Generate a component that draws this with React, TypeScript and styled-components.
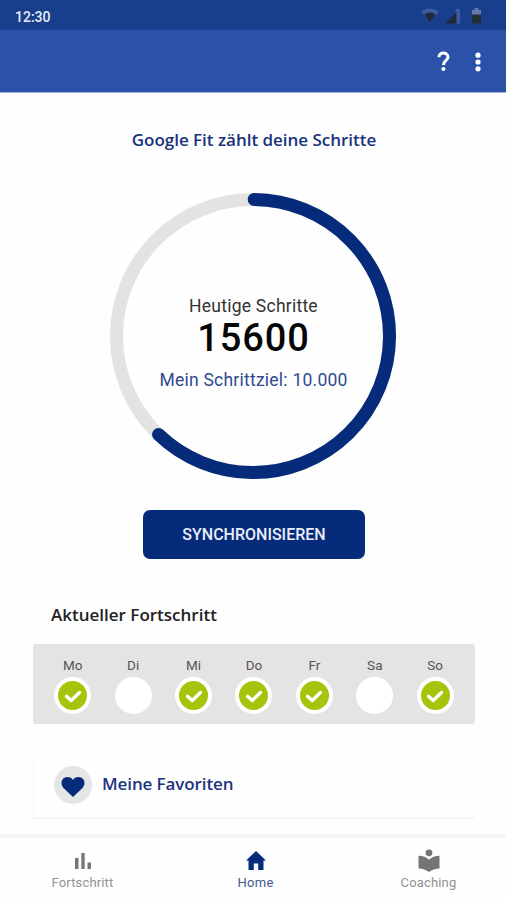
import React from 'react';
import styled, { createGlobalStyle } from 'styled-components';

const navy = '#062b7a';

const GlobalStyle = createGlobalStyle`
  * { box-sizing: border-box; }
  body { margin: 0; background: #fefefe; font-family: Roboto, sans-serif; }
`;

const Screen = styled.div`
  width: 506px;
  height: 900px;
  display: flex;
  flex-direction: column;
  overflow: hidden;
  background: #fefefe;
`;

const StatusBar = styled.div`
  height: 30px;
  flex: none;
  display: flex;
  align-items: center;
  justify-content: space-between;
  padding: 3px 23px 0 15px;
  background: #193f8c;
`;

const Clock = styled.span`
  color: #e6ecfa;
  font-size: 14px;
  font-weight: 500;
  line-height: 16px;
`;

const StatusIcons = styled.div`
  display: flex;
  align-items: center;
  gap: 6px;
`;

const AppBar = styled.header`
  height: 63px;
  flex: none;
  display: flex;
  align-items: center;
  justify-content: flex-end;
  gap: 24px;
  padding: 1px 24px 0 0;
  background: #2b52a8;
  border-bottom: 1px solid #9db4dc;
`;

const BarButton = styled.button`
  display: flex;
  padding: 0;
  border: 0;
  background: none;
`;

const Content = styled.main`
  flex: 1;
  min-height: 0;
  display: flex;
  flex-direction: column;
  align-items: center;
`;

const Title = styled.h1`
  margin: 35px 0 0;
  padding-left: 2px;
  height: 24px;
  font: 600 17px/24px 'Open Sans', sans-serif;
  letter-spacing: -0.02px;
  white-space: nowrap;
  color: #18327d;
`;

const Ring = styled.div`
  display: grid;
  width: 286px;
  height: 286px;
  margin-top: 41px;
  & > * { grid-area: 1 / 1; }
`;

const RingLabels = styled.div`
  display: flex;
  flex-direction: column;
  align-items: center;
  padding-top: 102px;
  padding-left: 1px;
  white-space: nowrap;
`;

const TodayLabel = styled.span`
  font-size: 17.5px;
  line-height: 22px;
  letter-spacing: 0.24px;
  color: #333;
`;

const StepCount = styled.strong`
  font: 500 38px/42px Roboto, sans-serif;
  letter-spacing: 0.9px;
  color: #050505;
`;

const GoalLabel = styled.span`
  margin-top: 10px;
  font-size: 17.5px;
  line-height: 22px;
  letter-spacing: 0.24px;
  color: #304a8f;
`;

const SyncButton = styled.button`
  width: 222px;
  height: 49px;
  margin-top: 31px;
  margin-left: 2px;
  padding: 0;
  border: 0;
  border-radius: 7px;
  background: ${navy};
  color: #e9edf8;
  font: 500 16px/20px Roboto, sans-serif;
`;

const SectionTitle = styled.h2`
  align-self: flex-start;
  margin: 44px 0 0 51px;
  font: 600 17px/24px 'Open Sans', sans-serif;
  white-space: nowrap;
  color: #222;
`;

const Week = styled.div`
  width: 442px;
  height: 80px;
  margin-top: 17px;
  margin-left: 2px;
  padding: 13px 9.6px 0;
  display: grid;
  grid-template-columns: repeat(7, 1fr);
  border-radius: 3px;
  background: #e4e4e4;
`;

const Day = styled.div`
  display: flex;
  flex-direction: column;
  align-items: center;
  gap: 3px;
`;

const DayName = styled.span`
  font-size: 13.5px;
  line-height: 17px;
  color: #555;
`;

const DayMark = styled.div<{ $done: boolean }>`
  width: 37px;
  height: 37px;
  border: 4.5px solid #fff;
  border-radius: 50%;
  background: ${(p) => (p.$done ? '#a5c50c' : '#fff')};
  display: flex;
  align-items: center;
  justify-content: center;
`;

const Favorites = styled.div`
  width: 442px;
  height: 67px;
  margin-top: 28px;
  margin-left: 2px;
  padding: 0 0 0 20px;
  display: flex;
  align-items: center;
  gap: 10px;
  border: 1px solid #f9f9f9;
  border-top-color: transparent;
  border-bottom: 2px solid #f5f5f5;
  border-radius: 3px;
`;

const HeartBadge = styled.div`
  width: 38px;
  height: 38px;
  border-radius: 50%;
  background: #e4e5e7;
  display: flex;
  align-items: center;
  justify-content: center;
  padding-top: 3px;
`;

const FavoritesLabel = styled.span`
  font: 600 17px/24px 'Open Sans', sans-serif;
  letter-spacing: -0.1px;
  white-space: nowrap;
  margin-top: -3px;
  color: #1c347f;
`;

const BottomNav = styled.nav`
  height: 66px;
  flex: none;
  margin: 0 -9px 0 -4px;
  display: grid;
  grid-template-columns: repeat(3, 1fr);
  border-top: 4px solid #f6f6f6;
`;

const Tab = styled.a<{ $active?: boolean }>`
  display: flex;
  flex-direction: column;
  align-items: center;
  padding-top: 11px;
  gap: 2px;
  font-size: 13px;
  line-height: 17px;
  letter-spacing: ${(p) => (p.$active ? '0.3px' : '0.15px')};
  color: ${(p) => (p.$active ? '#44588f' : '#929292')};
`;

const days: [string, boolean][] = [
  ['Mo', true], ['Di', false], ['Mi', true], ['Do', true], ['Fr', true], ['Sa', false], ['So', true],
];

const radius = 136.5;
const circumference = 2 * Math.PI * radius;
const progress = 0.62;

const Check = () => (
  <svg width="18" height="14" viewBox="0 0 18 14" fill="none">
    <path d="M2.500 7.200 7.200 11.500 15.500 3.500" stroke="#fff" strokeWidth="3.300" strokeLinecap="round" strokeLinejoin="round" />
  </svg>
);

export default function App() {
  return (
    <>
      <GlobalStyle />
      <Screen>
        <StatusBar>
          <Clock>12:30</Clock>
          <StatusIcons>
            <svg width="62" height="18" viewBox="0 0 62 18">
              <path d="M0 3.500Q9-2.500 18 3.500L9 14.500Z" fill="#3d5c9f" />
              <path d="M3.200 6.700Q9 2.500 14.800 6.700L9 14.500Z" fill="#202a3c" />
              <path d="M34.500 1H39V15.500H34.500Z" fill="#3d5c9f" />
              <path d="M24.500 15.500 35.500 4V15.500Z" fill="#202a3c" />
              <path d="M51 2H53.500V0H57.500V2H60V7.500H51Z" fill="#6179ad" />
              <path d="M51 6.500H60V15.500H51Z" fill="#252e36" />
            </svg>
          </StatusIcons>
        </StatusBar>
        <AppBar>
          <BarButton aria-label="Hilfe">
            <svg width="13" height="21" viewBox="0 0 13 21" fill="none">
              <path d="M2 6.200C2 3.500 4 2 6.400 2S11 3.500 11 6C11 9.300 6.500 9.600 6.500 14" stroke="#fff" strokeWidth="3" />
              <circle cx="6.400" cy="18" r="2.100" fill="#fff" />
            </svg>
          </BarButton>
          <BarButton aria-label="Mehr">
            <svg width="8" height="20" viewBox="0 0 8 20" fill="#fff">
              <circle cx="4" cy="3.200" r="2.600" />
              <circle cx="4" cy="10" r="2.600" />
              <circle cx="4" cy="16.800" r="2.600" />
            </svg>
          </BarButton>
        </AppBar>
        <Content>
          <Title>Google Fit zählt deine Schritte</Title>
          <Ring>
            <svg width="286" height="286" viewBox="0 0 286 286" fill="none">
              <circle cx="143" cy="143" r={radius} stroke="#e3e3e3" strokeWidth="13" />
              <circle
                cx="143"
                cy="143"
                r={radius}
                stroke={navy}
                strokeWidth="13"
                strokeLinecap="round"
                strokeDasharray={`${circumference * progress} ${circumference}`}
                transform="rotate(-89.5 143 143)"
              />
            </svg>
            <RingLabels>
              <TodayLabel>Heutige Schritte</TodayLabel>
              <StepCount>15600</StepCount>
              <GoalLabel>Mein Schrittziel: 10.000</GoalLabel>
            </RingLabels>
          </Ring>
          <SyncButton>SYNCHRONISIEREN</SyncButton>
          <SectionTitle>Aktueller Fortschritt</SectionTitle>
          <Week>
            {days.map(([name, done]) => (
              <Day key={name}>
                <DayName>{name}</DayName>
                <DayMark $done={done}>{done && <Check />}</DayMark>
              </Day>
            ))}
          </Week>
          <Favorites>
            <HeartBadge>
              <svg width="24" height="22" viewBox="0 0 24 22">
                <path d="M12 21 2.500 12C-1.500 7.500 1 1 6.400 1C9 1 11 2.200 12 4C13 2.200 15 1 17.600 1C23 1 25.500 7.500 21.500 12Z" fill={navy} />
              </svg>
            </HeartBadge>
            <FavoritesLabel>Meine Favoriten</FavoritesLabel>
          </Favorites>
        </Content>
        <BottomNav>
          <Tab>
            <svg width="18" height="23" viewBox="0 0 18 23" fill="#777">
              <path d="M1 9H4.500V20H1ZM7.300 4H10.700V20H7.300ZM13.500 13.500H17V20H13.500Z" />
            </svg>
            Fortschritt
          </Tab>
          <Tab $active>
            <svg width="22" height="23" viewBox="0 0 22 23" fill={navy}>
              <path d="M11 2 21 11.500H18.500V21H13.200V14.500H8.800V21H3.500V11.500H1Z" />
            </svg>
            Home
          </Tab>
          <Tab>
            <svg width="22" height="23" viewBox="0 0 22 23" fill="#757575">
              <circle cx="11" cy="3.800" r="3.400" />
              <path d="M.5 6.800Q7 7 11 10.800Q15 7 21.500 6.800V19.500Q15.500 19.500 11 23Q6.500 19.500.5 19.500Z" />
            </svg>
            Coaching
          </Tab>
        </BottomNav>
      </Screen>
    </>
  );
}
